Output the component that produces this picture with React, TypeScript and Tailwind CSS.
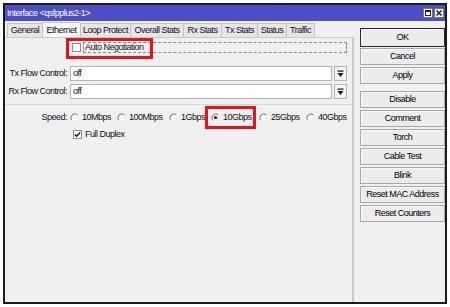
import React from 'react';

const font = "font-['Liberation_Sans',Arial,sans-serif]";

const tabs = [
    { name: 'General', w: 'w-[36px]' },
    { name: 'Ethernet', w: 'w-[39px]', active: true },
    { name: 'Loop Protect', w: 'w-[51px]' },
    { name: 'Overall Stats', w: 'w-[54px]' },
    { name: 'Rx Stats', w: 'w-[39px]' },
    { name: 'Tx Stats', w: 'w-[37px]' },
    { name: 'Status', w: 'w-[30px]' },
    { name: 'Traffic', w: 'w-[29px]' },
];

const speeds = [
    { label: '10Mbps', w: 'w-[47px]' },
    { label: '100Mbps', w: 'w-[52px]' },
    { label: '1Gbps', w: 'w-[42px]' },
    { label: '10Gbps', w: 'w-[48px]', checked: true },
    { label: '25Gbps', w: 'w-[47px]' },
    { label: '40Gbps', w: 'w-[40px]' },
];

const Radio = ({ checked }: { checked?: boolean }) => (
    <svg width="9" height="9" viewBox="0 0 9 9" className="shrink-0">
        <circle cx="4.5" cy="4.5" r="4" fill="#fff" />
        <path d="M7.3 1.7 A4 4 0 0 0 1.7 7.3" fill="none" stroke="#6b6b6b" strokeWidth="1" />
        <path d="M1.7 7.3 A4 4 0 0 0 7.3 1.7" fill="none" stroke="#e6e6e6" strokeWidth="1" />
        {checked && <circle cx="4.5" cy="4.5" r="1.6" fill="#111" />}
    </svg>
);

const Checkbox = ({ checked }: { checked?: boolean }) => (
    <div className="w-[9px] h-[9px] shrink-0 border border-[#8e8e8e] bg-white flex items-center justify-center">
        {checked && (
            <svg width="7" height="7" viewBox="0 0 7 7">
                <path d="M0.8 3.4 L2.7 5.3 L6.2 1.4" fill="none" stroke="#111" strokeWidth="1.4" />
            </svg>
        )}
    </div>
);

const DropButton = () => (
    <div className="w-[13px] h-[15px] ml-[2px] shrink-0 border border-[#b4b4b4] bg-[#f4f4f4] flex items-center justify-center">
        <svg width="7" height="8" viewBox="0 0 7 8">
            <rect x="0.5" y="0.5" width="6" height="1.2" fill="#111" />
            <path d="M0.5 3 H6.5 L3.5 7 Z" fill="#111" />
        </svg>
    </div>
);

const SideButton = ({ children, ok, extra = '' }: { children: React.ReactNode; ok?: boolean; extra?: string }) => (
    <div
        className={`w-[85px] ${ok ? 'h-[19px] border-[#2a2a2a]' : 'h-[17px] border-[#a8a8a8]'} ${extra} border bg-[#ececec] flex items-center justify-center text-black shadow-[inset_1px_1px_0_#fafafa]`}
    >
        {children}
    </div>
);

export default function App() {
    return (
        <div
            className={`relative w-[450px] h-[307px] bg-white p-[3px] ${font} text-[9px] tracking-[-0.5px] leading-none text-[#111] whitespace-nowrap`}
        >
            <div className="h-full border-2 border-[#1c1c1c] bg-[#f0f0f0] flex flex-col">
                {/* Title bar */}
                <div className="h-[16px] bg-[#4b4fc7] flex items-center justify-between pl-[2px] pr-[1px]">
                    <span className="text-white">Interface &lt;qsfpplus2-1&gt;</span>
                    <div className="flex gap-[1px]">
                        <div className="w-[10px] h-[10px] bg-[#f2f2f2] border border-[#777] flex items-center justify-center">
                            <div className="w-[6px] h-[6px] border border-[#222] border-t-2" />
                        </div>
                        <div className="w-[10px] h-[10px] bg-[#f2f2f2] border border-[#777] flex items-center justify-center">
                            <svg width="6" height="6" viewBox="0 0 6 6">
                                <path d="M0.5 0.5 L5.5 5.5 M5.5 0.5 L0.5 5.5" stroke="#222" strokeWidth="1.5" />
                            </svg>
                        </div>
                    </div>
                </div>

                <div className="flex flex-1">
                    {/* Left column */}
                    <div className="w-[349px] flex flex-col">
                        <div className="flex items-end h-[16px] pl-[2px]">
                            {tabs.map(t => (
                                <div
                                    key={t.name}
                                    className={`${t.w} flex items-center justify-center border border-b-0 border-[#c4c4c4] -ml-px first:ml-0 ${
                                        t.active ? 'h-[15px] bg-[#fafafa] relative z-10' : 'h-[14px] bg-[#e6e6e6]'
                                    }`}
                                >
                                    {t.name}
                                </div>
                            ))}
                        </div>

                        <div className="flex-1 border-t border-r-2 border-[#cacaca] flex flex-col">
                            {/* Auto Negotiation */}
                            <div className="flex items-center h-[11px] mt-[4px] pl-[67px] pr-[5px]">
                                <Checkbox />
                                <div className="flex-1 h-[11px] ml-[2px] border border-dashed border-[#8a8a8a] flex items-center pl-[1px]">
                                    Auto Negotiation
                                </div>
                            </div>

                            {/* Flow control */}
                            {['Tx Flow Control:', 'Rx Flow Control:'].map((label, i) => (
                                <div key={label} className={`flex items-center h-[15px] ${i === 0 ? 'mt-[13px]' : 'mt-[3px]'}`}>
                                    <div className="w-[63px] shrink-0 text-right pr-[1px]">{label}</div>
                                    <div className="w-[262px] h-[15px] ml-[2px] bg-white border border-[#b4b4b4] flex items-center pl-[2px]">
                                        off
                                    </div>
                                    <DropButton />
                                </div>
                            ))}

                            <div className="mt-[5px] h-px bg-[#d8d8d8]" />

                            {/* Speed */}
                            <div className="flex items-center h-[11px] mt-[7px]">
                                <div className="w-[63px] shrink-0 text-right pr-[1px]">Speed:</div>
                                <div className="flex items-center pl-[2px]">
                                    {speeds.map(s => (
                                        <div key={s.label} className={`flex items-center shrink-0 ${s.w}`}>
                                            <Radio checked={s.checked} />
                                            <span className="ml-[3px]">{s.label}</span>
                                        </div>
                                    ))}
                                </div>
                            </div>

                            {/* Full Duplex */}
                            <div className="flex items-center h-[10px] mt-[6px] pl-[68px]">
                                <Checkbox checked />
                                <span className="ml-[3px]">Full Duplex</span>
                            </div>
                        </div>
                    </div>

                    {/* Right buttons */}
                    <div className="flex-1 flex flex-col gap-[2px] pt-[7px] pl-[6px]">
                        <SideButton ok>OK</SideButton>
                        <SideButton extra="-mt-px">Cancel</SideButton>
                        <SideButton>Apply</SideButton>
                        <SideButton extra="mt-[5px]">Disable</SideButton>
                        <SideButton>Comment</SideButton>
                        <SideButton>Torch</SideButton>
                        <SideButton>Cable Test</SideButton>
                        <SideButton>Blink</SideButton>
                        <SideButton>Reset MAC Address</SideButton>
                        <SideButton>Reset Counters</SideButton>
                    </div>
                </div>
            </div>

            {/* Red highlight boxes */}
            <div className="absolute left-[66px] top-[38px] w-[87px] h-[21px] border-[3px] border-[#e8121a]" />
            <div className="absolute left-[205px] top-[106px] w-[51px] h-[23px] border-[3px] border-[#e8121a]" />
        </div>
    );
}
